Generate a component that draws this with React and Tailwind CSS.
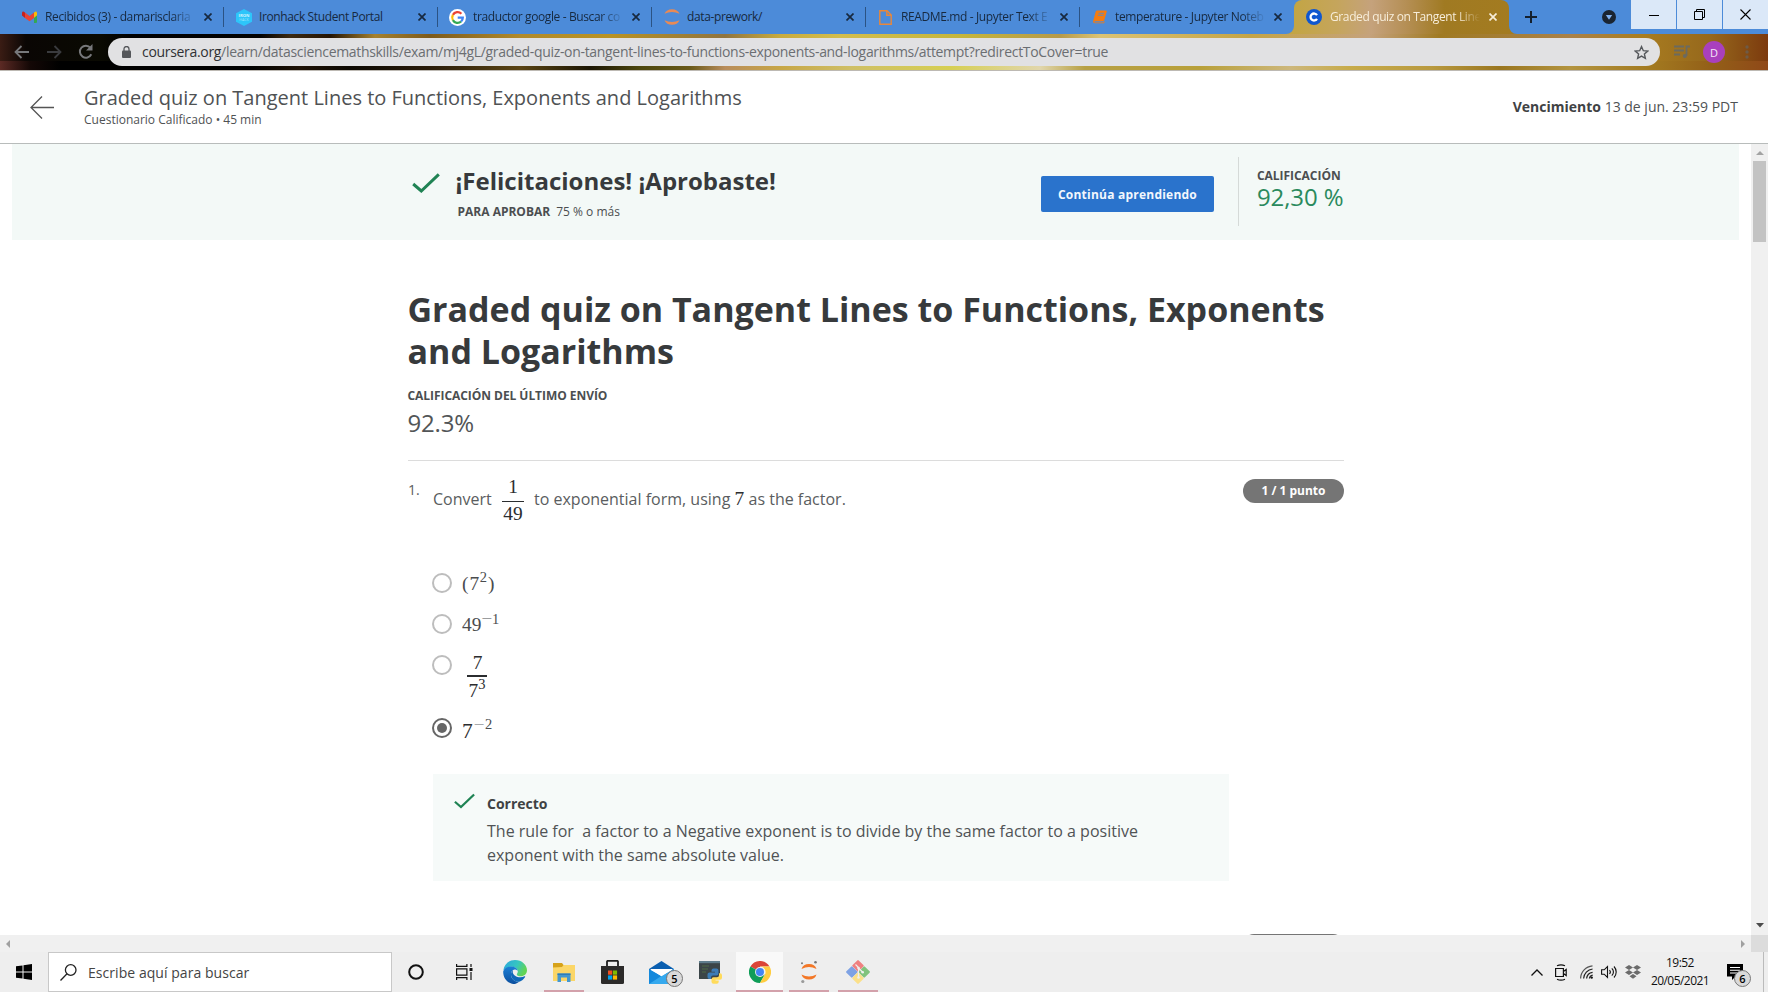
import React from 'react';

const ui = "font-['Open_Sans','Noto_Sans',sans-serif]";

/* ---------- tab icons ---------- */
const Gmail = () => (
  <svg width="15" height="12" viewBox="0 0 15 12">
    <path d="M0 2v2.5l3 2.4V1.6L1.8.7C1 .2 0 .9 0 2z" fill="#c5221f" />
    <path d="M3 1.6v5.3l4.5 3.4L12 6.900V1.600L7.500 5z" fill="#ea4335" />
    <path d="M15 2v2.500l-3 2.400V1.600l1.200-.9c.8-.5 1.800.2 1.800 1.300z" fill="#fbbc04" />
    <path d="M12 6.900l3-2.400V11a1 1 0 0 1-1 1h-2z" fill="#34a853" />
  </svg>
);
const Ironhack = () => (
  <svg width="16" height="17" viewBox="0 0 16 17">
    <path d="M8 0l8 4.200v8.600L8 17l-8-4.200V4.200z" fill="#2dc5fa" />
    <text x="8" y="8.300" textAnchor="middle" fontSize="4.200" fontWeight="700" fill="#d5f3ff" fontFamily="Open Sans, sans-serif">IRON</text>
    <text x="8" y="12.300" textAnchor="middle" fontSize="3.600" fill="#9fe4fd" fontFamily="Open Sans, sans-serif">HACK</text>
  </svg>
);
const Google = () => (
  <svg width="17" height="17" viewBox="0 0 17 17">
    <circle cx="8.500" cy="8.500" r="8.500" fill="#fff" />
    <g fill="none" strokeWidth="2.300">
      <path d="M12.400 4.700A5.300 5.300 0 0 0 3.900 5.900" stroke="#ea4335" />
      <path d="M3.900 5.900a5.300 5.300 0 0 0 0 5.200" stroke="#fbbc05" />
      <path d="M3.900 11.100a5.300 5.300 0 0 0 8.200 1.400" stroke="#34a853" />
      <path d="M12.100 12.500a5.300 5.300 0 0 0 1.700-3.900H8.700" stroke="#4285f4" />
    </g>
  </svg>
);
const Jupyter = () => (
  <svg width="16" height="18" viewBox="0 0 16 18" fill="#e88a55">
    <path d="M.5 5.800A8 7 0 0 1 15.500 5.800 12 7 0 0 0 .5 5.800z" />
    <path d="M.5 12.200a8 7 0 0 0 15 0 12 7 0 0 1-15 0z" />
  </svg>
);
const FileIcon = () => (
  <svg width="13" height="15" viewBox="0 0 13 15" fill="none" stroke="#e8873a" strokeWidth="1.400">
    <path d="M.8.800h7.200L12.200 5v9.200H.8z" />
    <path d="M7.800.800V5.200h4.400" />
  </svg>
);
const Book = () => (
  <svg width="14" height="14" viewBox="0 0 14 14">
    <path d="M4.200.5h8.500a1 1 0 0 1 1 1.300l-2.500 8.500a1.500 1.500 0 0 1-1.400 1H1.800c-.6 0-.6 1.100.2 1.100h8.400l.5-1.200.8.300-.6 1.800H1.900A2 2 0 0 1 .2 10.700l2.500-9A1.600 1.600 0 0 1 4.200.5z" fill="#f57c10" />
    <path d="M5.500 3.300h5.500M4.900 5.300h5.500" stroke="#4c8bd9" strokeWidth=".8" />
  </svg>
);
const Coursera = () => (
  <svg width="16" height="16" viewBox="0 0 16 16">
    <circle cx="8" cy="8" r="8" fill="#0f57d0" />
    <path d="M11 6.100A3.500 3.500 0 1 0 11 9.900" fill="none" stroke="#fff" strokeWidth="2.300" />
  </svg>
);
const Close = () => (
  <svg className="shrink-0" width="8" height="8" viewBox="0 0 8 8" stroke="currentColor" strokeWidth="1.700">
    <path d="M.5.5l7 7M7.500.5l-7 7" />
  </svg>
);

const fade = "[mask-image:linear-gradient(90deg,#000_84%,transparent_100%)]";
const tabs = [
  { icon: <Gmail />, text: 'Recibidos (3) - damarisclaria', cut: true },
  { icon: <Ironhack />, text: 'Ironhack Student Portal' },
  { icon: <Google />, text: 'traductor google - Buscar co', cut: true },
  { icon: <Jupyter />, text: 'data-prework/' },
  { icon: <FileIcon />, text: 'README.md - Jupyter Text E', cut: true },
  { icon: <Book />, text: 'temperature - Jupyter Noteb', cut: true },
];

function TabBar() {
  return (
    <div className="flex h-[34px] bg-[#4c8bd9] text-[#17293f]">
      <div className="flex w-[1294px] pl-[10px]">
        {tabs.map((t, i) => (
          <div key={i} className="flex h-[34px] w-[214.200px] items-center pl-[11px]">
            <span className="flex w-[17px] shrink-0 justify-center">{t.icon}</span>
            <span className={`ml-[7px] w-[151px] shrink-0 whitespace-nowrap text-[12px] leading-[18px] tracking-[-0.380px] ${t.cut ? fade : ''}`}>{t.text}</span>
            <span className="ml-[8px] flex"><Close /></span>
            {i < 5 && <span className="ml-auto h-[20px] w-px shrink-0 bg-[#2b5384]" />}
          </div>
        ))}
      </div>
      <div className="relative flex w-[215px] items-center rounded-t-[8px] bg-[linear-gradient(90deg,#c3a544_0%,#c5a55c_20%,#c5a27c_36%,#b58f55_52%,#a07a22_70%,#a37b20_100%)] pl-[12px] text-[#f7edda]">
        <svg className="absolute -left-[8px] bottom-0" width="8" height="8"><path d="M8 0v8H0a8 8 0 0 0 8-8z" fill="#c3a544" /></svg>
        <svg className="absolute -right-[8px] bottom-0" width="8" height="8"><path d="M0 0v8h8a8 8 0 0 1-8-8z" fill="#a37b20" /></svg>
        <Coursera />
        <span className={`ml-[8px] w-[150px] shrink-0 whitespace-nowrap text-[12px] leading-[18px] tracking-[-0.380px] ${fade}`}>Graded quiz on Tangent Line</span>
        <span className="ml-[9px] flex"><Close /></span>
      </div>
      <div className="flex flex-1 items-center">
        <svg className="ml-[16px]" width="12" height="12" stroke="#14202e" strokeWidth="2"><path d="M6 0v12M0 6h12" /></svg>
        <svg className="ml-[65px]" width="14" height="14"><circle cx="7" cy="7" r="7" fill="#1a2431" /><path d="M3.800 5h6.400L7 9.800z" fill="#7fb0ee" /></svg>
        <div className="ml-auto flex h-[34px] gap-px">
          <span className="flex h-[29px] w-[45px] items-center justify-center bg-[#dbe8f8]"><svg width="10" height="10"><path d="M0 5.500h10" stroke="#000" /></svg></span>
          <span className="flex h-[29px] w-[45px] items-center justify-center bg-[#dbe8f8]"><svg width="11" height="11" fill="none" stroke="#000"><path d="M.5 2.500h8v8h-8zM2.500 2.500v-2h8v8h-2" /></svg></span>
          <span className="flex h-[29px] w-[45px] items-center justify-center bg-[#dbe8f8]"><svg width="11" height="11" stroke="#000" strokeWidth="1.100"><path d="M.5.5l10 10M10.500.5l-10 10" /></svg></span>
        </div>
      </div>
    </div>
  );
}

function Toolbar() {
  return (
    <div className="h-[37px] bg-[linear-gradient(90deg,#3a1c14_0px,#0a0604_26px,#0a0a02_100px,#000_130px,#020100_260px,#3c2a12_290px,#241404_330px,#a5812f_375px,#7c5a1c_430px,#b08a2c_520px,#b99324_610px,#8f7440_725px,#c8ab3e_780px,#d3bd4c_840px,#c5b63c_960px,#b69a4a_1060px,#dcc373_1100px,#c4a446_1250px,#c5a27c_1370px,#a07a22_1440px,#a98149_1570px,#a97d20_1640px,#96681c_1710px,#7c3a0e_1768px)]">
      <div className="flex h-[37px] items-center border-b border-[#bdb9b3] bg-[linear-gradient(90deg,#5c2a24_0px,#140806_30px,#000_60px,#000_250px,#1e1206_300px,#0c0802_350px,#2a1c0a_430px,#5a4414_520px,#1c1604_590px,#4c470e_640px,#6a5a1a_690px,#b98d5c_725px,#c7a646_780px,#cfbf66_850px,#d6cf52_950px,#e1d6ac_1040px,#b7a044_1085px,#b8a03a_1200px,#cdb77c_1290px,#c7ab4a_1350px,#b99a40_1430px,#9a7620_1500px,#b39440_1570px,#a37a20_1650px,#936018_1710px,#8f4818_1768px)] bg-[length:100%_25%] bg-bottom bg-no-repeat">
        <svg className="ml-[14px]" width="15" height="14" fill="none" stroke="#77787b" strokeWidth="1.800"><path d="M15 7H1.500M7.500 1l-6 6 6 6" /></svg>
        <svg className="ml-[18px]" width="15" height="14" fill="none" stroke="#3a3b3e" strokeWidth="1.800"><path d="M0 7h13.500M7.500 1l6 6-6 6" /></svg>
        <svg className="ml-[16px]" width="16" height="16" fill="none" stroke="#77787b" strokeWidth="2"><path d="M13.300 10.300a6 6 0 1 1-.8-6.500" /><path d="M14.500 0v6.500H8z" fill="#77787b" stroke="none" /></svg>
        <div className="ml-[14px] flex h-[28px] w-[1552px] items-center rounded-full bg-[#e1e1e3] pr-[11px] pl-[14px]">
          <svg width="9" height="12"><rect y="4.500" width="9" height="7.500" rx="1" fill="#54565a" /><path d="M2 5V3a2.500 2.500 0 0 1 5 0v2" fill="none" stroke="#54565a" strokeWidth="1.300" /></svg>
          <span className="ml-[11px] whitespace-nowrap text-[14px] leading-[20px] tracking-[-0.317px] text-[#6b6e72]"><span className="text-[#303134]">coursera.org</span>/learn/datasciencemathskills/exam/mj4gL/graded-quiz-on-tangent-lines-to-functions-exponents-and-logarithms/attempt?redirectToCover=true</span>
          <svg className="ml-auto" width="15" height="15" viewBox="0 0 14 14" fill="none" stroke="#55585c" strokeWidth="1.300"><path d="M7 1.500l1.700 3.800 4.100.4-3.100 2.700.9 4L7 10.300l-3.600 2.100.9-4L1.200 5.700l4.100-.4z" /></svg>
        </div>
        <svg className="ml-[14px]" width="16" height="14" fill="none" stroke="#6b6a60" strokeWidth="1.800"><path d="M0 1.500h10M0 5.500h10M0 9.500h6" /><path d="M12.500 11V1.500h3.500" /><circle cx="10.800" cy="11" r="2" fill="#6b6a60" stroke="none" /></svg>
        <span className="ml-[13px] flex h-[22px] w-[22px] items-center justify-center rounded-full bg-[#a940bd] text-[11px] leading-none text-[#f6e6f8]">D</span>
        <svg className="ml-[20px]" width="4" height="14" fill="#6f5b46"><circle cx="2" cy="2" r="1.700" /><circle cx="2" cy="7" r="1.700" /><circle cx="2" cy="12" r="1.700" /></svg>
      </div>
    </div>
  );
}

const Check = ({ w, h, s }) => (
  <svg width={w} height={h} viewBox="0 0 28 20" fill="none" stroke="#1f8354" strokeWidth={s}>
    <path d="M1.200 11L9.300 18 26.800 1.300" />
  </svg>
);

function Radio({ on }) {
  return (
    <span className={`flex h-[20px] w-[20px] shrink-0 items-center justify-center rounded-full border-2 ${on ? 'border-[#666]' : 'border-[#bdbdbd]'}`}>
      {on && <span className="h-[10px] w-[10px] rounded-full bg-[#666]" />}
    </span>
  );
}

const math = "font-['Liberation_Serif',serif] text-[19.400px] leading-[20px] whitespace-nowrap";
const sup = "align-[8px] text-[14.500px] leading-[0]";

function Content() {
  return (
    <div className="h-[791px] w-[1751px] overflow-hidden bg-white">
      <div className="mr-[12px] ml-[12px] h-[96px] bg-[#f3f9f7]">
        <div className="ml-[396px] flex w-[936px] items-start">
          <div className="mt-[29px] ml-[4px] flex"><Check w="28" height="20" h="20" s="3" /></div>
          <div className="ml-[15px] w-[586px] pt-[21px]">
            <div className="pl-[0.500px] text-[24px] leading-[32px] font-bold text-[#373a3c]">¡Felicitaciones! ¡Aprobaste!</div>
            <div className="mt-[7px] ml-[2.500px] flex gap-[6px] text-[12px] leading-[16px] text-[#4b4e50]"><b>PARA APROBAR</b><span>75 % o más</span></div>
          </div>
          <div className="mt-[32px] flex h-[36px] w-[173px] items-center justify-center rounded-[2px] bg-[#2a73cc] pt-[2px] text-[12px] font-bold tracking-[0.230px] text-[#f2f7fd]">Continúa aprendiendo</div>
          <div className="mt-[13px] ml-[24px] h-[69px] w-px bg-[#d5dad8]" />
          <div className="ml-[18px] pt-[24px]">
            <div className="text-[12px] leading-[16px] font-bold tracking-[-0.040px] text-[#4b4e50]">CALIFICACIÓN</div>
            <div className="-mt-px text-[24px] leading-[28px] tracking-[-0.100px] whitespace-nowrap text-[#2a8a5d]">92,30 %</div>
          </div>
        </div>
      </div>

      <div className="ml-[408px] w-[936px] text-[#373a3c]">
        <h1 className="-ml-[0.500px] pt-[48px] text-[34px] leading-[42px] font-bold whitespace-nowrap">Graded quiz on Tangent Lines to Functions, Exponents<br />and Logarithms</h1>
        <div className="-ml-[0.500px] mt-[16px] text-[12px] leading-[16px] font-bold tracking-[-0.050px] text-[#4b4e50]">CALIFICACIÓN DEL ÚLTIMO ENVÍO</div>
        <div className="-ml-[0.500px] mt-[3px] text-[24px] leading-[32px] tracking-[-0.200px] text-[#525557]">92.3%</div>
        <div className="mt-[21px] h-px bg-[#dcdcdc]" />

        <div className="flex h-[112px] items-start text-[#5a5d60]">
          <span className="mt-[19px] w-[25px] text-[14px] leading-[20px]">1.</span>
          <span className="mt-[26px] w-[69px] text-[16px] leading-[24px]">Convert</span>
          <span className={`mt-[16px] flex w-[22px] flex-col items-center text-[#2b2d2f] ${math}`}>
            <span>1</span><span className="mt-[4px] h-px w-[22px] bg-[#2b2d2f]" /><span className="mt-[1.500px]">49</span>
          </span>
          <span className="mt-[26px] ml-[10px] w-[200.500px] text-[16px] leading-[24px] whitespace-nowrap">to exponential form, using</span>
          <span className={`mt-[28px] w-[14px] text-[#2b2d2f] ${math}`}>7</span>
          <span className="mt-[26px] text-[16px] leading-[24px] whitespace-nowrap">as the factor.</span>
          <span className="mt-[18px] ml-auto flex h-[24px] w-[101px] items-center justify-center rounded-full bg-[#757575] text-[12px] font-bold whitespace-nowrap text-white">1 / 1 punto</span>
        </div>

        <div className="ml-[24px] w-[796px] text-[#4a4c4e]">
          <div className="flex h-[41px] items-start"><Radio /><span className={`mt-[0.500px] ml-[10px] ${math}`}><span className="mr-[1px]">(</span>7<span className={`ml-[0.500px] ${sup}`}>2</span><span className="ml-[1px]">)</span></span></div>
          <div className="flex h-[41px] items-start"><Radio /><span className={`mt-[0.500px] ml-[10px] ${math}`}>49<span className="align-[6px] text-[19px] leading-[0] text-[#9a9c9e]">−</span><span className={`align-[7.500px] text-[14.500px] leading-[0]`}>1</span></span></div>
          <div className="flex h-[63px] items-start"><Radio />
            <span className={`-mt-[2.500px] ml-[15px] flex w-[20px] flex-col items-center text-[#2b2d2f] ${math}`}>
              <span className="ml-[1px]">7</span><span className="mt-[2.500px] h-[2px] w-[20px] bg-[#2b2d2f]" /><span className="mt-[4px]">7<span className={sup}>3</span></span>
            </span>
          </div>
          <div className="flex h-[56px] items-start"><Radio on /><span className={`mt-[4px] ml-[10px] ${math}`}><span className="text-[21.500px] leading-[0] text-[#2b2d2f]">7</span><span className="ml-[1px] align-[7px] text-[19px] leading-[0] text-[#a8aaac]">−</span><span className={`ml-[0.500px] align-[9px] text-[14.500px] leading-[0]`}>2</span></span></div>
        </div>

        <div className="ml-[25px] flex h-[107px] w-[796px] bg-[#f6faf9]">
          <div className="mt-[19px] ml-[21px] w-[33px]"><Check w="21" h="16" s="3" /></div>
          <div className="pt-[20px] whitespace-nowrap text-[#505355]">
            <div className="text-[14px] leading-[20px] font-bold text-[#3f4244]">Correcto</div>
            <p className="mt-[5px] text-[16px] leading-[24px]">The rule for&nbsp; a factor to a Negative exponent is to divide by the same factor to a positive<br />exponent with the same absolute value.</p>
          </div>
        </div>
        <div className="mt-[53px] ml-auto h-[24px] w-[101px] rounded-[11px] bg-[#757575]" />
      </div>
    </div>
  );
}

const Badge = ({ children, pos }) => (
  <span className={`absolute flex h-[17px] w-[17px] items-center justify-center rounded-full border border-[#777] bg-[#d9d9d9] text-[11px] leading-none font-semibold text-black ${pos}`}>{children}</span>
);

const Edge = () => (
  <svg width="24" height="24" viewBox="0 0 24 24">
    <defs>
      <linearGradient id="ea" x1="0" y1="0" x2="1" y2=".4"><stop offset="0" stopColor="#2aa5e0" /><stop offset=".6" stopColor="#36c6c0" /><stop offset="1" stopColor="#62d455" /></linearGradient>
      <linearGradient id="eb" x1="0" y1="0" x2="0" y2="1"><stop offset="0" stopColor="#1b7fd6" /><stop offset="1" stopColor="#0c4f9e" /></linearGradient>
    </defs>
    <path d="M.3 10.500C1.200 4.200 6.200 0 12 0c7 0 12 5 12 10.300 0 3.700-2.900 6-6.200 6-2.500 0-4-.9-4-1.900 0-.6 1-1.200 1-2.900C14.800 9 12 6.800 8.500 6.800 5 6.800 1.500 8.500.3 10.500z" fill="url(#ea)" />
    <path d="M.2 11.500C1 8.500 4.500 6.500 8.300 6.500c3.300 0 6 1.800 6.300 4.200-.8-.9-1.900-1.200-3-1.200-2.200.3-3.600 2.300-3.600 5 0 4.500 4 7.500 8.200 7.300A12 12 0 0 1 12 24C5.500 24 0 18.700.2 11.500z" fill="url(#eb)" />
    <path d="M8 14.500c0 4.500 4 7.500 8.200 7.300 2.500-1 4.600-2.600 5.900-4.900.3-.5-.2-.8-.6-.6-1.400.7-2.800 1-4.200 1-3.700 0-7.600-2-7.600-5.500 0-.6.2-1.200.5-1.800C8.800 11 8 12.500 8 14.500z" fill="#0f67b8" />
  </svg>
);
const Explorer = () => (
  <svg width="22" height="19" viewBox="0 0 22 19">
    <path d="M0 0h9l1.500 2H22v3H0z" fill="#d6a21a" /><path d="M0 4.500l9-.5 1.500-2H22v16H0z" fill="#fbd667" />
    <path d="M4.500 10.500h13V19h-3.500v-4.500H8V19H4.500z" fill="#4497cf" /><path d="M4.500 10.500h13V12h-13z" fill="#2f7db8" />
  </svg>
);
const Store = () => (
  <svg width="23" height="24" viewBox="0 0 23 24">
    <path d="M6 6V1.500A1 1 0 0 1 7 .8h9a1 1 0 0 1 1 .7V6" fill="none" stroke="#1d1d1d" strokeWidth="1.800" />
    <path d="M0 6h23v16.500a1.500 1.500 0 0 1-1.500 1.500h-20A1.500 1.500 0 0 1 0 22.500z" fill="#2b2a29" />
    <path d="M7 10.500h4.200v4.200H7z" fill="#f25022" /><path d="M11.900 10.500h4.200v4.200h-4.200z" fill="#7fba00" /><path d="M7 15.400h4.200v4.200H7z" fill="#00a4ef" /><path d="M11.900 15.400h4.200v4.200h-4.200z" fill="#ffb900" />
  </svg>
);
const Mail = () => (
  <svg width="25" height="23" viewBox="0 0 25 23">
    <path d="M0 8l12.500-8L25 8v2H0z" fill="#0b5fb0" /><path d="M2 8h21v8H2z" fill="#fff" /><path d="M0 8v15h25V8l-12.500 7z" fill="#1489dc" /><path d="M0 23L14 14l11-6v15z" fill="#35a9ee" /><path d="M1 8h23l-11.500 7.300z" fill="#fff" />
  </svg>
);
const Python = () => (
  <svg width="23" height="23" viewBox="0 0 23 23">
    <path d="M0 0h21v18H0z" fill="#3b4548" /><path d="M0 0h21v2.200H0z" fill="#5f7d8c" /><path d="M3 5h7M3 8h6M3 11h4" stroke="#4f6b45" strokeWidth="1.200" />
    <path d="M14.500 7.500h3a2 2 0 0 1 2 2v3a2 2 0 0 1-2 2h-3.500a2 2 0 0 0-2 2v1.500h-1.500a2 2 0 0 1-2-2v-2.500a2 2 0 0 1 2-2H16v-.8h-3.500V9.500a2 2 0 0 1 2-2z" fill="#3b7cb6" />
    <path d="M17.500 22.800h-3a2 2 0 0 1-2-2v-2.500a2 2 0 0 1 2-2H18a2 2 0 0 0 2-2v-2h1a2 2 0 0 1 2 2v2.500a2 2 0 0 1-2 2h-4.500v.8h3.200v1.200a2 2 0 0 1-2.200 2z" fill="#ffdb5b" />
  </svg>
);
const Chrome = () => (
  <svg width="22" height="22" viewBox="0 0 24 24">
    <path d="M12 12L1.600 6A12 12 0 0 1 22.400 6H12z" fill="#db4437" />
    <path d="M12 12L1.600 6A12 12 0 0 0 12 24l5.200-9z" fill="#0f9d58" />
    <path d="M12 6h10.400A12 12 0 0 1 12 24l5.200-9A6 6 0 0 0 12 6z" fill="#ffcd40" />
    <circle cx="12" cy="12" r="5.400" fill="#f1f1f1" /><circle cx="12" cy="12" r="4.400" fill="#4285f4" />
  </svg>
);
const JupyterTask = () => (
  <svg width="18" height="24" viewBox="0 0 18 24">
    <path d="M1.500 9a7.800 7 0 0 1 15 0A12 7.500 0 0 0 1.500 9z" fill="#f37726" /><path d="M1.500 14.500a7.800 7 0 0 0 15 0 12 7.500 0 0 1-15 0z" fill="#f37726" />
    <circle cx="15.500" cy="2.200" r="1.300" fill="#767677" /><circle cx="2" cy="3.300" r="1" fill="#767677" /><circle cx="2.800" cy="21.500" r="1.600" fill="#9a9a9a" />
  </svg>
);
const Git = () => (
  <svg width="24" height="24" viewBox="0 0 24 24">
    <rect x="7.700" y="1.500" width="8.600" height="8.600" rx="1" transform="rotate(45 12 5.800)" fill="#f08080" />
    <rect x="1.500" y="7.700" width="8.600" height="8.600" rx="1" transform="rotate(45 5.800 12)" fill="#7ea2e4" />
    <rect x="13.900" y="7.700" width="8.600" height="8.600" rx="1" transform="rotate(45 18.200 12)" fill="#80c37c" />
    <rect x="7.700" y="13.900" width="8.600" height="8.600" rx="1" transform="rotate(45 12 18.200)" fill="#fbe08a" />
    <path d="M9.500 4.500l3 3v10M12.500 8l4 4" fill="none" stroke="#efefef" strokeWidth="1.200" /><circle cx="12.500" cy="8" r="1.300" fill="#efefef" /><circle cx="16.700" cy="12.200" r="1.300" fill="#efefef" /><circle cx="12.500" cy="17.500" r="1.300" fill="#efefef" />
  </svg>
);

const apps = [
  { icon: <Edge /> },
  { icon: <Explorer />, line: 'border-[#d3a1ab]' },
  { icon: <Store /> },
  { icon: <Mail />, badge: '5' },
  { icon: <Python /> },
  { icon: <Chrome />, line: 'border-[#d3a1ab]', bg: true },
  { icon: <JupyterTask />, line: 'border-[#d3a1ab]' },
  { icon: <Git />, line: 'border-[#d3a1ab]' },
];

function Taskbar() {
  return (
    <div className="flex h-[40px] bg-[#eee]">
      <div className="flex w-[48px] items-center justify-center">
        <svg width="16" height="16"><path d="M0 2.300L6.500 1.400V7.500H0zM7.500 1.200L16 0v7.500H7.500zM0 8.500h6.500v6.100L0 13.700zM7.500 8.500H16V16l-8.500-1.200z" /></svg>
      </div>
      <div className="flex w-[344px] items-center border border-[#c8c8c8] bg-white pl-[11px]">
        <svg width="17" height="17" fill="none" stroke="#222" strokeWidth="1.300"><circle cx="10.700" cy="6" r="5.300" /><path d="M7 9.800L.5 16.500" /></svg>
        <span className="ml-[11px] pt-[2px] text-[14px] leading-[20px] tracking-[0.050px] text-[#444]">Escribe aquí para buscar</span>
      </div>
      <div className="flex w-[48px] items-center justify-center"><svg width="16" height="16"><circle cx="8" cy="8" r="6.800" fill="none" stroke="#111" strokeWidth="2" /></svg></div>
      <div className="flex w-[50px] items-center pl-[16px]">
        <svg width="17" height="16" fill="none" stroke="#111" strokeWidth="1.200"><path d="M.6 0v2.400h10.300V0M.6 4.800h10.300v6.400H.6zM.6 16v-2.400h10.300V16M15 0v3M15 8v8" /><path d="M13.500 4h3v3h-3z" fill="#111" stroke="none" /></svg>
      </div>
      <div className="flex">
        {apps.map((a, i) => (
          <div key={i} className="relative flex w-[49px] items-center justify-center">
            <span className={`flex h-[40px] items-center justify-center border-b-2 pt-[2px] ${a.bg ? 'w-[47px] bg-[#f9f9f9]' : 'w-[40px]'} ${a.line || 'border-transparent'}`}>{a.icon}</span>
            {a.badge && <Badge pos="left-[29px] top-[18px]">{a.badge}</Badge>}
          </div>
        ))}
      </div>
      <div className="ml-auto flex items-center">
        <svg width="12" height="7" fill="none" stroke="#111" strokeWidth="1.300"><path d="M.5 6.500L6 1l5.500 5.500" /></svg>
        <svg className="ml-[12px]" width="12" height="17" fill="none" stroke="#111" strokeWidth="1.200"><path d="M2 1.800q4-2 8 0M2 15.200q4 2 8 0M.6 4.500h7.800v8H.6zM8.400 7.500l2.800-2v6l-2.800-2" /></svg>
        <svg className="ml-[13px]" width="13" height="14" fill="none" strokeWidth="1.200"><path d="M.6 13.500A13 13 0 0 1 12.500.8" stroke="#555" /><path d="M3.600 13.500a10 10 0 0 1 9-9.500M6.600 13.500a7 7 0 0 1 6-6.200" stroke="#222" /><path d="M9.400 13.500a4 4 0 0 1 3.300-3.400" stroke="#222" /><circle cx="11.700" cy="12.600" r="1.200" fill="#111" /></svg>
        <svg className="ml-[8px]" width="17" height="14" fill="none" stroke="#111" strokeWidth="1.100"><path d="M.6 4.800h2.600L6.500 1.500v11L3.200 9.200H.6zM8.500 5a3 3 0 0 1 0 4M10.800 3.300a5 5 0 0 1 0 7.400M13 1.500a8 8 0 0 1 0 11" /></svg>
        <svg className="ml-[7px]" width="16" height="14" fill="#6b6b6b"><path d="M4 0l4 2.500L4 5 0 2.500zM12 0l4 2.500L12 5 8 2.500zM4 5l4 2.500L4 10 0 7.500zM12 5l4 2.500L12 10 8 7.500zM8 9l3.500 2.300L8 13.800l-3.500-2.500z" /></svg>
        <div className="ml-[8px] w-[62px] text-center text-[12px] leading-[18px] tracking-[-0.550px] text-[#111]"><div className="-mt-px">19:52</div><div>20/05/2021</div></div>
        <div className="relative ml-[16px] flex h-[40px] w-[37px] items-start border-r border-[#bbb]">
          <svg className="mt-[12px]" width="16" height="16"><path d="M0 0h16v12.500H8.500L5 16v-3.500H0z" fill="#000" /><path d="M3 3.500h10M3 6.300h10M3 9h7" stroke="#fff" strokeWidth="1.100" /></svg>
          <Badge pos="left-[7px] top-[18px]">6</Badge>
        </div>
        <span className="w-[4px]" />
      </div>
    </div>
  );
}

export default function App() {
  return (
    <div className={`flex h-[992px] w-[1768px] flex-col overflow-hidden bg-white ${ui}`}>
      <TabBar />
      <Toolbar />
      <header className="flex h-[73px] items-start justify-between border-b border-[#b8bcbb] pr-[30px] pl-[30px] text-[#4f5254]">
        <div className="flex">
          <svg className="mt-[25px]" width="24" height="23" fill="none" stroke="#555" strokeWidth="1.300"><path d="M24 11.500H1M12 .5l-11 11 11 11" /></svg>
          <div className="ml-[30px] pt-[15px]">
            <div className="text-[20px] leading-[24px]">Graded quiz on Tangent Lines to Functions, Exponents and Logarithms</div>
            <div className="mt-[2px] text-[12px] leading-[16px]">Cuestionario Calificado • 45 min</div>
          </div>
        </div>
        <div className="mt-[26px] text-[14px] leading-[20px]"><b className="text-[#3f4244]">Vencimiento</b> 13 de jun. 23:59 PDT</div>
      </header>
      <div className="flex h-[791px]">
        <Content />
        <div className="flex w-[17px] flex-col items-center bg-[#f0f0f0]">
          <svg className="mt-[6px]" width="8" height="5"><path d="M0 5l4-4 4 4z" fill="#a3a3a3" /></svg>
          <span className="mt-[6px] h-[81px] w-[13px] bg-[#c3c3c3]" />
          <svg className="mt-auto mb-[7px]" width="8" height="5"><path d="M0 0h8L4 4.500z" fill="#4b4b4b" /></svg>
        </div>
      </div>
      <div className="flex h-[17px] items-center bg-[#f0f0f0]">
        <svg className="ml-[6px]" width="4" height="8"><path d="M4 0v8L0 4z" fill="#a0a0a0" /></svg>
        <svg className="ml-auto mr-[6px]" width="4" height="8"><path d="M0 0v8l4-4z" fill="#a0a0a0" /></svg>
        <span className="h-[17px] w-[17px] bg-[#dcdcdc]" />
      </div>
      <Taskbar />
    </div>
  );
}
